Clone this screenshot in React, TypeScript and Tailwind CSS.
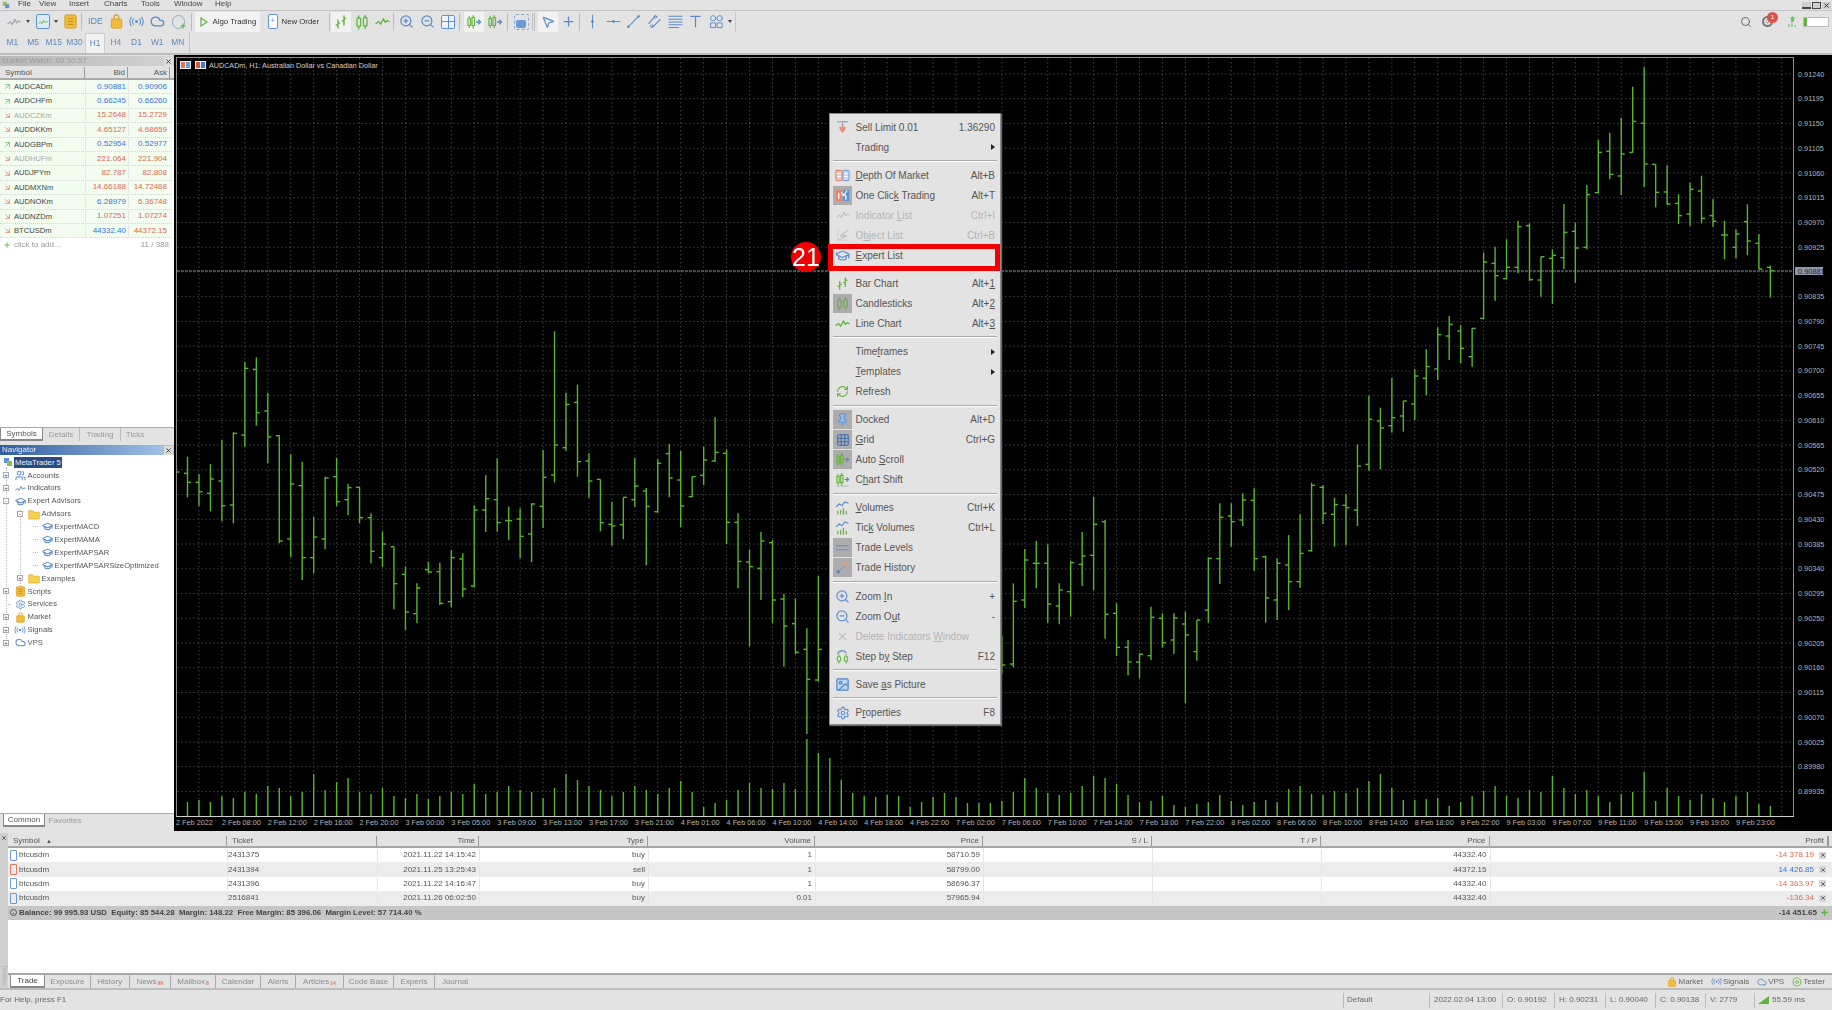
import type { ReactNode } from "react";
import {
  ArrowDownRight,
  ArrowUpRight,
  Bell,
  Cloud,
  GraduationCap,
  Grid3x3,
  Image,
  MousePointer2,
  Pin,
  Plus,
  RefreshCw,
  Search,
  Settings,
  ShoppingBag,
  Users,
  X,
  ZoomIn,
  ZoomOut,
} from "lucide-react";

// bars traced from the picture: [high, low, open, close] in crop pixels (y = offset + px / 3)
const BARS_A = [
  [530, 652, 580, 607], [582, 678, 607, 635], [552, 694, 640, 597], [480, 724, 603, 677], [457, 730, 675, 460],
  [245, 500, 465, 265], [232, 437, 268, 398], [338, 550, 393, 471], [466, 790, 467, 783], [523, 832, 777, 612],
  [545, 900, 617, 833], [710, 880, 833, 771], [590, 808, 777, 594], [533, 678, 590, 665], [612, 706, 659, 623],
  [622, 730, 622, 713], [700, 850, 713, 814], [755, 860, 833, 792], [800, 988, 800, 911], [860, 1050, 883, 996],
  [910, 1030, 1001, 924], [845, 880, 869, 876], [848, 975, 875, 970], [810, 982, 965, 833], [820, 952, 837, 927],
  [676, 922, 918, 690], [585, 756, 690, 656], [535, 755, 659, 728], [680, 780, 722, 722], [685, 834, 717, 769],
  [670, 846, 762, 672], [510, 744, 679, 592], [154, 607, 585, 495], [338, 512, 503, 373], [314, 590, 367, 545],
  [520, 653, 543, 603], [598, 754, 598, 728], [665, 797, 733, 738], [652, 777, 734, 652], [533, 680, 659, 618],
  [624, 856, 633, 679], [538, 698, 695, 550], [492, 652, 521, 594], [512, 742, 600, 678], [590, 652, 650, 590],
  [500, 615, 586, 540], [412, 545, 543, 517], [508, 792, 520, 727], [700, 925, 727, 844], [808, 1098, 846, 860],
  [755, 960, 865, 783], [780, 1030, 788, 960], [942, 1160, 957, 1038], [955, 1122, 1031, 1117], [1045, 1362, 1108, 1198],
  [888, 1205, 1200, 1108],
];
const BARS_B = [
  [708, 822, 795, 795], [550, 802, 792, 604], [447, 625, 600, 480], [423, 565, 490, 490], [433, 668, 490, 612],
  [550, 673, 618, 570], [482, 650, 575, 488], [396, 558, 493, 468], [290, 570, 466, 373], [360, 716, 365, 643],
  [610, 768, 640, 742], [720, 826, 742, 786], [760, 835, 786, 763], [620, 780, 767, 652], [640, 743, 655, 728],
  [640, 762, 720, 654], [635, 910, 672, 705], [660, 782, 755, 660], [472, 668, 630, 475], [310, 552, 476, 352],
  [310, 440, 348, 365], [280, 378, 360, 300], [265, 512, 301, 476], [467, 668, 470, 594], [475, 660, 600, 490],
  [405, 630, 495, 545], [343, 563, 545, 460], [248, 455, 452, 256], [255, 372, 262, 340], [293, 440, 343, 314],
  [281, 436, 316, 323], [133, 378, 330, 198],
];
const BARS_C = [
  [1007, 1232, 1213, 1078], [1043, 1228, 1083, 1104], [953, 1118, 1097, 1073], [1023, 1115, 1068, 1023], [928, 1080, 1032, 948],
  [868, 1005, 955, 920], [802, 960, 927, 824], [768, 900, 828, 793], [795, 910, 813, 865], [805, 920, 890, 805],
  [578, 778, 775, 606], [560, 722, 610, 647], [538, 658, 656, 622], [482, 640, 622, 500], [490, 663, 497, 659],
  [590, 710, 660, 590], [568, 732, 595, 586], [432, 628, 593, 517], [488, 668, 514, 564], [375, 568, 562, 404],
  [240, 400, 398, 277], [218, 358, 274, 343], [174, 405, 348, 282], [80, 278, 277, 184], [22, 380, 190, 312],
  [313, 442, 313, 397], [316, 435, 396, 432], [403, 492, 430, 467], [368, 497, 462, 388], [347, 490, 393, 475],
  [418, 500, 467, 484], [482, 598, 525, 525], [508, 595, 562, 522], [433, 585, 485, 543], [522, 628, 550, 627],
  [617, 713, 622, 632],
];
const VOLUMES = [
  14, 16, 14, 20, 18, 24, 22, 30, 28, 20, 24, 42, 26, 34, 38, 24, 22, 28, 20, 18, 22, 17, 20, 24, 22, 32, 22, 24, 30, 26,
  24, 18, 28, 42, 36, 30, 26, 20, 24, 30, 26, 22, 28, 35, 24, 9, 13, 16, 26, 33, 28, 27, 33, 27, 77, 63, 58, 36, 23, 20,
  19, 21, 20, 9, 14, 19, 23, 19, 13, 13, 13, 15, 24, 38, 28, 23, 21, 23, 30, 40, 38, 32, 21, 14, 15, 20, 11, 9, 12, 14,
  21, 15, 11, 14, 16, 14, 27, 30, 22, 21, 25, 23, 28, 35, 42, 28, 16, 16, 17, 18, 10, 14, 20, 25, 30, 20, 18, 26, 24, 40,
  28, 22, 26, 20, 14, 22, 24, 44, 15, 28, 20, 16, 22, 18, 14, 20, 24, 12, 10,
];
const PRICE_LABELS = [
  "0.91240", "0.91195", "0.91150", "0.91105", "0.91060", "0.91015", "0.90970", "0.90925", "", "0.90835",
  "0.90790", "0.90745", "0.90700", "0.90655", "0.90610", "0.90565", "0.90520", "0.90475", "0.90430", "0.90385",
  "0.90340", "0.90295", "0.90250", "0.90205", "0.90160", "0.90115", "0.90070", "0.90025", "0.89980", "0.89935",
];
const DATE_LABELS = [
  "2 Feb 2022", "2 Feb 08:00", "2 Feb 12:00", "2 Feb 16:00", "2 Feb 20:00", "3 Feb 00:00", "3 Feb 05:00", "3 Feb 09:00",
  "3 Feb 13:00", "3 Feb 17:00", "3 Feb 21:00", "4 Feb 01:00", "4 Feb 06:00", "4 Feb 10:00", "4 Feb 14:00", "4 Feb 18:00",
  "4 Feb 22:00", "7 Feb 02:00", "7 Feb 06:00", "7 Feb 10:00", "7 Feb 14:00", "7 Feb 18:00", "7 Feb 22:00", "8 Feb 02:00",
  "8 Feb 06:00", "8 Feb 10:00", "8 Feb 14:00", "8 Feb 18:00", "8 Feb 22:00", "9 Feb 03:00", "9 Feb 07:00", "9 Feb 11:00",
  "9 Feb 15:00", "9 Feb 19:00", "9 Feb 23:00",
];

const GREEN = "#59b62c";
const BLUE = "#5b8cc8";

const barX = (i: number) => 187.5 + 11.47 * i;
const gridY = (i: number) => 74 + 24.74 * i;

function Bar({ i, bar, offset }: { i: number; bar: number[]; offset: number }) {
  const x = barX(i);
  const [h, l, o, c] = bar.map((v) => offset + v / 3);
  return (
    <g>
      <line x1={x} x2={x} y1={h} y2={l} />
      <line x1={x - 3.5} x2={x} y1={o} y2={o} />
      <line x1={x} x2={x + 3.5} y1={c} y2={c} />
    </g>
  );
}

function Chart() {
  const verticals = Array.from({ length: 70 }, (_, i) => barX(2 * i + 1));
  return (
    <svg viewBox="174 55 1658 776" className="absolute inset-0 h-full w-full">
      <g stroke="#3f4349" strokeWidth="1" strokeDasharray="1.5 2.5">
        {verticals.map((x) => (
          <line key={x} x1={x} x2={x} y1={58} y2={816} />
        ))}
        {PRICE_LABELS.map((_, i) => (
          <line key={i} x1={177} x2={1793} y1={gridY(i)} y2={gridY(i)} />
        ))}
      </g>
      <rect x="176.5" y="57.5" width="1617" height="759" fill="none" stroke="#8d8d8d" />
      <line x1="176" x2="1794" y1="816.5" y2="816.5" stroke="#d0d0d0" />
      <line x1="177" x2="1794" y1="271" y2="271" stroke="#7f8899" strokeDasharray="3 1" />
      <g stroke={GREEN} strokeWidth="1.4">
        <line x1="177" x2="179.5" y1="472" y2="472" />
        {BARS_A.map((b, i) => <Bar key={i} i={i} bar={b} offset={280} />)}
        {BARS_B.map((b, i) => <Bar key={i} i={i + 71} bar={b} offset={400} />)}
        {BARS_C.map((b, i) => <Bar key={i} i={i + 103} bar={b} offset={60} />)}
      </g>
      <g stroke={GREEN} strokeWidth="1.4">
        {VOLUMES.map((v, i) => (
          <line key={i} x1={barX(i)} x2={barX(i)} y1={816 - v} y2={816} />
        ))}
      </g>
      <g fill="#b4b4b4" fontSize="7.3" fontFamily="'Liberation Sans', sans-serif">
        {PRICE_LABELS.map((label, i) => (
          <text key={i} x={1798} y={gridY(i) + 2.6}>{label}</text>
        ))}
        {DATE_LABELS.map((label, i) => (
          <text key={label} x={176 + 45.88 * i} y={825}>{label}</text>
        ))}
      </g>
      <rect x="1795" y="267" width="28" height="8" fill="#8d97ad" />
      <text x="1798" y="273.6" fontSize="7.4" fill="#262a33" fontFamily="'Liberation Sans', sans-serif">0.90881</text>
      <g>
        <rect x="180" y="61" width="11" height="8" fill="#f3f3f3" />
        <rect x="181" y="62" width="4" height="6" fill="#e0765a" />
        <rect x="186" y="62" width="4" height="6" fill="#6c9ad6" />
        <rect x="195" y="61" width="11" height="8" fill="#f3f3f3" />
        <rect x="196" y="62" width="4" height="6" fill="#d8573f" />
        <rect x="201" y="62" width="4" height="6" fill="#3f7cc8" />
      </g>
      <text x="209" y="68" fontSize="7.2" fill="#d0d0d0" fontFamily="'Liberation Sans', sans-serif">AUDCADm, H1:  Australian Dollar vs Canadian Dollar</text>
    </svg>
  );
}

// --- small drawn icons -------------------------------------------------------

function Svg({ size = 16, children }: { size?: number; children: ReactNode }) {
  return (
    <svg width={size} height={size} viewBox="0 0 16 16" fill="none" strokeLinecap="round" strokeLinejoin="round">
      {children}
    </svg>
  );
}

const BarsIcon = ({ size }: { size?: number }) => (
  <Svg size={size}>
    <g stroke="#62b53c" strokeWidth="1.4">
      <path d="M5 6v8M3.2 11H5M5 9h1.6" />
      <path d="M11 2v9M9.2 7H11M11 4.5h1.8" />
    </g>
  </Svg>
);
const CandlesIcon = ({ size }: { size?: number }) => (
  <Svg size={size}>
    <g stroke="#62b53c" strokeWidth="1.3">
      <rect x="3" y="4" width="3.6" height="8.5" rx="1" />
      <rect x="9.4" y="3.5" width="3.6" height="8.5" rx="1" />
      <path d="M4.8 2v2M4.8 12.5V15M11.2 1.5v2M11.2 12v2.5" />
    </g>
  </Svg>
);
const LineChartIcon = ({ size, color = "#62b53c" }: { size?: number; color?: string }) => (
  <Svg size={size}>
    <path d="M1 10l3-2 2 3 3-6 2 4 2-2 2 1" stroke={color} strokeWidth="1.4" />
  </Svg>
);
const ScrollIcon = ({ size, shift }: { size?: number; shift?: boolean }) => (
  <Svg size={size}>
    <g stroke="#62b53c" strokeWidth="1.2">
      <rect x="2" y="4.5" width="2.5" height="7" />
      <rect x="6" y="3.5" width="2.5" height="8" />
      <path d="M3.2 2.5v2M3.2 11.5v2M7.2 1.5v2M7.2 11.5v2.5" />
    </g>
    <path d="M10.5 8H14" stroke={BLUE} strokeWidth="1.3" />
    <path d="M12.5 6l2 2-2 2" stroke={BLUE} strokeWidth="1.3" />
    {shift ? <path d="M2 15h12" stroke="#b5b5b5" strokeWidth="1" /> : null}
  </Svg>
);
const DepthIcon = ({ size }: { size?: number }) => (
  <Svg size={size}>
    <rect x="1" y="2.5" width="6.5" height="11" rx="1" fill="#f0c7b9" stroke="#dd7a5e" />
    <rect x="8.5" y="2.5" width="6.5" height="11" rx="1" fill="#c3d8f2" stroke="#6c9ad6" />
    <path d="M2.5 6h3.5M2.5 9h3.5M10 6h3.5M10 9h3.5" stroke="#fff" />
  </Svg>
);
const OneClickIcon = ({ size }: { size?: number }) => (
  <Svg size={size}>
    <rect x="1" y="2" width="6.5" height="12" fill="#e8876b" />
    <rect x="8.5" y="2" width="6.5" height="12" fill="#5f92d4" />
    <path d="M7 5l2.5 3 3-5" stroke="#fff" strokeWidth="1.3" />
    <path d="M4 6v5M11.5 8v4" stroke="#fff" strokeWidth="1.4" />
  </Svg>
);
const SellIcon = ({ size }: { size?: number }) => (
  <Svg size={size}>
    <path d="M2 1h12" stroke="#5f92d4" strokeWidth="1.2" />
    <path d="M8 3.5v9" stroke="#dd7a5e" strokeWidth="1.6" />
    <path d="M4.8 7.5c0 3.5 1.5 5.5 3.2 6 1.7-.5 3.2-2.5 3.2-6" fill="#e59a82" stroke="#dd7a5e" />
  </Svg>
);
const ObjectsIcon = ({ size }: { size?: number }) => (
  <Svg size={size}>
    <path d="M2 14l10-5H5l9-7" stroke="#bdbdbd" strokeWidth="1.2" />
    <path d="M2 2v12h12" stroke="#cfcfcf" strokeWidth="1" />
  </Svg>
);
const VolumesIcon = ({ size }: { size?: number }) => (
  <Svg size={size}>
    <path d="M1.5 7l3-3 3 2 3-4 3.5 1.5" stroke={BLUE} strokeWidth="1.2" />
    <path d="M3 15v-3M6 15v-4M9 15v-6M12 15v-3" stroke="#62b53c" strokeWidth="1.3" />
    <path d="M9 15v-3" stroke="#dd7a5e" strokeWidth="1.3" />
  </Svg>
);
const LevelsIcon = ({ size }: { size?: number }) => (
  <Svg size={size}>
    <path d="M1.5 6h13M1.5 10.5h13" stroke={BLUE} strokeWidth="1.1" strokeDasharray="1.4 1.4" />
  </Svg>
);
const HistoryIcon = ({ size }: { size?: number }) => (
  <Svg size={size}>
    <path d="M3 13l10-9" stroke={BLUE} strokeWidth="1" strokeDasharray="1.5 1" />
    <circle cx="3.5" cy="12.5" r="2" fill={BLUE} />
    <circle cx="12" cy="4.5" r="2.4" fill="#e59a82" />
  </Svg>
);
const StepIcon = ({ size }: { size?: number }) => (
  <Svg size={size}>
    <path d="M3 5c1-3.5 7-4 9-1" stroke={BLUE} strokeWidth="1.2" />
    <g stroke="#62b53c" strokeWidth="1.2">
      <rect x="2.5" y="8" width="3.5" height="5" rx="1.6" />
      <rect x="10" y="8" width="3.5" height="5" rx="1.6" />
      <path d="M4.2 6v2M4.2 13v2M11.8 6v2M11.8 13v2" />
    </g>
  </Svg>
);
const BookIcon = ({ size = 13 }: { size?: number }) => (
  <svg width={size} height={size} viewBox="0 0 16 16">
    <rect x="2" y="1" width="12" height="14" rx="1.5" fill="#eebd3d" stroke="#d89b1b" />
    <path d="M5 5h6M5 8h6M5 11h6" stroke="#c98f13" strokeWidth="1.2" />
  </svg>
);
const SignalsIcon = ({ size = 14 }: { size?: number }) => (
  <Svg size={size}>
    <circle cx="8" cy="8" r="1.6" fill={BLUE} />
    <path d="M4.8 5a5 5 0 0 0 0 6M11.2 5a5 5 0 0 1 0 6M2.4 3.5a8 8 0 0 0 0 9M13.6 3.5a8 8 0 0 1 0 9" stroke={BLUE} strokeWidth="1.1" />
  </Svg>
);
const TesterIcon = ({ size = 13 }: { size?: number }) => (
  <Svg size={size}>
    <path d="M8 1l6 3.5v7L8 15l-6-3.5v-7z" stroke="#62b53c" strokeWidth="1.3" />
    <circle cx="8" cy="8" r="2.4" stroke="#62b53c" strokeWidth="1.2" />
  </Svg>
);
const BagIcon = ({ size = 13 }: { size?: number }) => (
  <svg width={size} height={size} viewBox="0 0 16 16" fill="none">
    <path d="M5.5 6V3.5a2.5 2.5 0 0 1 5 0V6" stroke="#d89b1b" strokeWidth="1.3" />
    <rect x="2.5" y="5.5" width="11" height="9.5" rx="1" fill="#f2bd3b" stroke="#dd9f1d" />
  </svg>
);
const FolderIcon = () => (
  <svg width="12" height="11" viewBox="0 0 16 14">
    <path d="M1 2h5l2 2h7v9H1z" fill="#f6cf55" stroke="#e1ab2a" />
  </svg>
);

// --- toolbar -----------------------------------------------------------------

function Sep({ className }: { className: string }) {
  return <div className={`h-[18px] w-px shrink-0 bg-[#bdbdbd] ${className}`} />;
}

function Tool({ children, active, className = "" }: { children: ReactNode; active?: boolean; className?: string }) {
  return (
    <div className={`flex h-[20px] w-[20.7px] shrink-0 items-center justify-center ${active ? "bg-[#f2f2f2]" : ""} ${className}`}>
      {children}
    </div>
  );
}

const Caret = ({ className }: { className: string }) => (
  <div className={`h-0 w-0 shrink-0 border-x-[2px] border-t-[3px] border-x-transparent border-t-[#444] ${className}`} />
);

function MainToolbar() {
  return (
    <div className="flex h-[22px] items-center border-t border-[#c4c4c4] pl-[4px]">
      <Tool><LineChartIcon size={14} color="#9aa7b8" /></Tool>
      <Caret className="mr-[2px] ml-[1px]" />
      <Tool className="ml-[1px]">
        <div className="flex h-[15px] w-[14px] items-center justify-center rounded-[2px] border border-[#5f92d4] bg-[#dcebf9]">
          <LineChartIcon size={10} />
        </div>
      </Tool>
      <Caret className="mr-[1px] ml-[1px]" />
      <Tool className="ml-[1px]"><BookIcon size={15} /></Tool>
      <Sep className="mr-[3px]" />
      <Tool><span className="text-[9px] text-[#5f88bb]">IDE</span></Tool>
      <Tool><BagIcon size={15} /></Tool>
      <Tool><SignalsIcon size={15} /></Tool>
      <Tool><Cloud size={15} color={BLUE} /></Tool>
      <Tool>
        <div className="relative">
          <div className="h-[14px] w-[13px] rounded-full border border-[#8aa6c6]" />
          <Plus size={8} color="#62b53c" className="absolute right-[-2px] bottom-[-1px]" strokeWidth={3} />
        </div>
      </Tool>
      <Sep className="ml-[2px]" />
      <div className="ml-[3px] flex h-[20px] w-[65px] shrink-0 items-center gap-[5px] bg-[#f2f2f2] pl-[5px] text-[7.8px] whitespace-nowrap text-[#333]">
        <svg width="8" height="10" viewBox="0 0 8 10" className="shrink-0"><path d="M1 1l6 4-6 4z" fill="none" stroke="#62b53c" strokeWidth="1.2" /></svg>
        Algo Trading
      </div>
      <div className="ml-[3px] flex h-[20px] w-[63px] shrink-0 items-center gap-[4px] pl-[5px] text-[7.8px] whitespace-nowrap text-[#333]">
        <div className="flex h-[15px] w-[10px] shrink-0 items-center justify-center rounded-[2px] border border-[#5f92d4] bg-white text-[7px] text-[#5f92d4]">+</div>
        New Order
      </div>
      <Sep className="ml-[3px]" />
      <Tool active className="ml-[1px]"><BarsIcon size={16} /></Tool>
      <Tool><CandlesIcon size={16} /></Tool>
      <Tool><LineChartIcon size={15} /></Tool>
      <Sep className="" />
      <Tool className="ml-[3px]"><ZoomIn size={15} color={BLUE} /></Tool>
      <Tool><ZoomOut size={15} color={BLUE} /></Tool>
      <Tool>
        <div className="grid h-[14px] w-[14px] grid-cols-2 gap-px rounded-[2px] border border-[#5f92d4] bg-[#5f92d4]">
          <span className="bg-[#eef4fb]" /><span className="bg-[#eef4fb]" /><span className="bg-[#eef4fb]" /><span className="bg-[#eef4fb]" />
        </div>
      </Tool>
      <Sep className="" />
      <Tool active className="ml-[4px]"><ScrollIcon size={16} /></Tool>
      <Tool><ScrollIcon size={16} /></Tool>
      <Sep className="ml-[2px]" />
      <Tool className="ml-[3px]">
        <div className="flex h-[16px] w-[15px] items-end justify-center rounded-[2px] border border-dashed border-[#8aa6c6] pb-[1px]">
          <div className="h-[8px] w-[10px] rounded-[2px] bg-[#6c9ad6]" />
        </div>
      </Tool>
      <Sep className="" />
      <Sep className="ml-px" />
      <Tool active className="ml-[3px]"><MousePointer2 size={14} color={BLUE} /></Tool>
      <Tool><Plus size={15} color={BLUE} /></Tool>
      <Sep className="" />
      <Tool className="ml-[2px]">
        <Svg size={15}><path d="M8 1v14" stroke={BLUE} /><circle cx="8" cy="8" r="1.5" fill={BLUE} /></Svg>
      </Tool>
      <Tool>
        <Svg size={15}><path d="M1 8h14" stroke={BLUE} /><circle cx="8" cy="8" r="1.5" fill={BLUE} /></Svg>
      </Tool>
      <Tool>
        <Svg size={15}><path d="M2 14L14 2" stroke={BLUE} strokeWidth="1.2" /><circle cx="2.5" cy="13.5" r="1.3" fill={BLUE} /><circle cx="13.5" cy="2.5" r="1.3" fill={BLUE} /></Svg>
      </Tool>
      <Tool>
        <Svg size={15}><path d="M2 10l7-8M6 14l8-8" stroke={BLUE} strokeWidth="1.2" /><circle cx="9" cy="3" r="1.4" stroke={BLUE} /><circle cx="5" cy="13" r="1.4" stroke={BLUE} /></Svg>
      </Tool>
      <Tool>
        <Svg size={15}><path d="M1 2.5h14M1 5.5h14M1 8.5h14M1 11.5h14M1 14.5h10" stroke={BLUE} strokeWidth="1.1" /></Svg>
      </Tool>
      <Tool>
        <Svg size={15}><path d="M3 2.5h10M8 2.5v11" stroke={BLUE} strokeWidth="1.3" /></Svg>
      </Tool>
      <Tool>
        <Svg size={15}>
          <circle cx="4.5" cy="4.5" r="2.8" stroke={BLUE} />
          <circle cx="11.5" cy="4.5" r="2.8" stroke={BLUE} />
          <rect x="2" y="9.5" width="5" height="5" stroke={BLUE} />
          <rect x="9" y="9.5" width="5" height="5" stroke={BLUE} />
        </Svg>
      </Tool>
      <Caret className="ml-[1px]" />
      <div className="ml-[3px] h-[20px] w-px shrink-0 bg-[#c9c9c9]" />

      <div className="ml-auto flex items-center pr-[3px]">
        <Search size={12} color="#666" className="mr-[10px]" />
        <div className="relative mr-[14px]">
          <div className="flex h-[11px] w-[11px] items-center justify-center rounded-full border-2 border-[#777]">
            <Bell size={5} color="#777" />
          </div>
          <div className="absolute top-[-4px] left-[5px] flex h-[11px] w-[11px] items-center justify-center rounded-full bg-[#d9534a] text-[6px] text-white">1</div>
        </div>
        <svg width="11" height="13" viewBox="0 0 11 13" className="mr-[5px]">
          <path d="M5.5 1l3 3H7v3H4V4H2.5z" fill="#72c27a" />
          <path d="M2 9v3M5 8v4M8 10v2" stroke="#72c27a" strokeWidth="1.2" />
        </svg>
        <div className="flex h-[10px] w-[26px] border border-[#bbb] bg-white">
          <div className="w-[3px] bg-[#62b53c]" />
        </div>
      </div>
    </div>
  );
}

const TIMEFRAMES = ["M1", "M5", "M15", "M30", "H1", "H4", "D1", "W1", "MN"];

function TimeframeBar() {
  return (
    <div className="flex h-[23px] items-center border-b-2 border-[#bdbdbd] pl-[2px] text-[8.4px] text-[#5f88bb]">
      {TIMEFRAMES.map((t) => (
        <div
          key={t}
          className={`flex h-[20px] w-[20.7px] items-center justify-center ${t === "H1" ? "border-x border-t border-[#cfcfcf] bg-[#f2f2f2]" : ""}`}
        >
          {t}
        </div>
      ))}
      <div className="ml-[1px] h-[20px] w-px bg-[#c4c4c4]" />
    </div>
  );
}

// --- left panels -------------------------------------------------------------

const QUOTES = [
  { s: "AUDCADm", b: "0.90881", a: "0.90906", up: true, bb: true, ab: true },
  { s: "AUDCHFm", b: "0.66245", a: "0.66260", up: true, bb: true, ab: true },
  { s: "AUDCZKm", b: "15.2648", a: "15.2729", dim: true },
  { s: "AUDDKKm", b: "4.65127", a: "4.68659" },
  { s: "AUDGBPm", b: "0.52954", a: "0.52977", up: true, bb: true, ab: true },
  { s: "AUDHUFm", b: "221.064", a: "221.904", dim: true },
  { s: "AUDJPYm", b: "82.787", a: "82.808" },
  { s: "AUDMXNm", b: "14.66188", a: "14.72468" },
  { s: "AUDNOKm", b: "6.28979", a: "6.36748", bb: true },
  { s: "AUDNZDm", b: "1.07251", a: "1.07274" },
  { s: "BTCUSDm", b: "44332.40", a: "44372.15", bb: true },
];

function PanelClose() {
  return (
    <div className="flex h-[9px] w-[9px] items-center justify-center bg-[#dcdcdc]">
      <X size={7} color="#333" strokeWidth={3} />
    </div>
  );
}

function MarketWatch() {
  return (
    <div className="flex h-[390px] flex-col">
      <div className="mt-px flex h-[10px] shrink-0 items-center justify-between bg-gradient-to-r from-[#b8b8b8] to-[#d2d2d2] pr-[1px] pl-[2px] text-[8px] text-[#9a9a9a]">
        Market Watch: 02:30:57
        <PanelClose />
      </div>
      <div className="mt-px grid h-[13px] shrink-0 grid-cols-[85px_43px_42px] border-b-2 border-[#aaa] bg-[#e3e3e3] pr-[2px] text-[8px] leading-[11px] text-[#555]">
        <div className="border-r border-[#999] pl-[5px]">Symbol</div>
        <div className="border-r border-[#999] pr-[2px] text-right">Bid</div>
        <div className="border-r border-[#999] pr-[2px] text-right">Ask</div>
      </div>
      <div className="flex min-h-0 flex-1 flex-col bg-white pr-[2px]">
        {QUOTES.map((q) => (
          <div key={q.s} className="grid h-[14.4px] shrink-0 grid-cols-[85px_43px_42px] items-center border-b border-dotted border-[#d4d4d4] bg-[#f2fcef] text-[8px]">
            <div className={`flex items-center gap-[2px] pl-[3px] ${q.dim ? "text-[#a8a8a8]" : "text-[#444]"}`}>
              {q.up ? <ArrowUpRight size={9} color="#5fbb57" /> : <ArrowDownRight size={9} color="#e8795c" />}
              <span className="text-[7.6px]">{q.s}</span>
            </div>
            <div className={`border-l border-[#e6e6e6] pr-[2px] text-right ${q.bb ? "text-[#3f6fe0]" : "text-[#dc6a52]"}`}>{q.b}</div>
            <div className={`border-l border-[#e6e6e6] pr-[3px] text-right ${q.ab ? "text-[#3f6fe0]" : "text-[#dc6a52]"}`}>{q.a}</div>
          </div>
        ))}
        <div className="flex h-[14.4px] shrink-0 items-center justify-between pr-[3px] pl-[3px] text-[8px] text-[#999]">
          <span className="flex items-center gap-[3px]"><Plus size={8} color="#7bbd5f" strokeWidth={3} />click to add...</span>
          <span>11 / 388</span>
        </div>
      </div>
      <div className="flex h-[18px] shrink-0 items-start border-t border-[#aaa] pr-[2px] text-[8px] text-[#999]">
        <div className="flex h-[13px] w-[43px] items-center justify-center border-x border-b-2 border-[#888] bg-white text-[#555]">Symbols</div>
        <div className="flex h-[13px] w-[37px] items-center justify-center border-r border-[#bbb]">Details</div>
        <div className="flex h-[13px] w-[41px] items-center justify-center border-r border-[#bbb]">Trading</div>
        <div className="flex h-[13px] w-[28px] items-center justify-center">Ticks</div>
      </div>
    </div>
  );
}

const hat = <GraduationCap size={11} color="#4f85c7" strokeWidth={2.2} />;
const TREE = [
  { l: 0, e: "+", i: <Users size={11} color="#6c9ad6" strokeWidth={2.5} />, t: "Accounts" },
  { l: 0, e: "+", i: <LineChartIcon size={11} color="#5a8fb8" />, t: "Indicators" },
  { l: 0, e: "-", i: hat, t: "Expert Advisors" },
  { l: 1, e: "-", i: <FolderIcon />, t: "Advisors" },
  { l: 2, i: hat, t: "ExpertMACD" },
  { l: 2, i: hat, t: "ExpertMAMA" },
  { l: 2, i: hat, t: "ExpertMAPSAR" },
  { l: 2, i: hat, t: "ExpertMAPSARSizeOptimized" },
  { l: 1, e: "+", i: <FolderIcon />, t: "Examples" },
  { l: 0, e: "+", i: <BookIcon size={11} />, t: "Scripts" },
  { l: 0, i: <Settings size={11} color="#5f92d4" strokeWidth={2} />, t: "Services" },
  { l: 0, e: "+", i: <BagIcon size={11} />, t: "Market" },
  { l: 0, e: "+", i: <SignalsIcon size={12} />, t: "Signals" },
  { l: 0, e: "+", i: <Cloud size={11} color={BLUE} strokeWidth={2.2} />, t: "VPS" },
];
const LEVEL_PAD = ["pl-[1px]", "pl-[15px]", "pl-[28px]"];

function Navigator() {
  return (
    <div className="flex min-h-0 flex-1 flex-col">
      <div className="flex h-[10px] shrink-0 items-center justify-between bg-gradient-to-r from-[#2f5c9e] to-[#a9c9ea] pr-[1px] pl-[2px] text-[8px] text-[#e8eef6]">
        Navigator
        <PanelClose />
      </div>
      <div className="relative min-h-0 flex-1 bg-white pt-px text-[7.7px] text-[#555]">
        <div className="absolute top-[12px] bottom-[170px] left-[6px] border-l border-dotted border-[#bbb]" />
        <div className="absolute top-[55px] left-[20px] h-[76px] border-l border-dotted border-[#bbb]" />
        <div className="flex h-[12.9px] items-center pl-[3px]">
          <svg width="10" height="10" viewBox="0 0 10 10" className="mr-[1px]">
            <path d="M1 1h5v5H1z" fill="#5f92d4" />
            <path d="M4 4h5v5H4z" fill="#8cc152" />
          </svg>
          <span className="bg-[#2b4c82] px-px text-[#e8eef6]">MetaTrader 5</span>
        </div>
        {TREE.map((n) => (
          <div key={n.t} className={`relative flex h-[12.9px] items-center ${LEVEL_PAD[n.l]}`}>
            <div className="flex w-[10px] shrink-0 justify-center">
              {n.e ? (
                <div className="flex h-[6px] w-[6px] items-center justify-center border border-[#a8a8a8] bg-white text-[6px] leading-none text-[#444]">
                  {n.e}
                </div>
              ) : (
                <div className="ml-[5px] w-[7px] border-t border-dotted border-[#bbb]" />
              )}
            </div>
            <div className="ml-[3px] flex w-[12px] shrink-0 justify-center">{n.i}</div>
            <span className="ml-[1.5px] whitespace-nowrap">{n.t}</span>
          </div>
        ))}
      </div>
      <div className="flex h-[20px] shrink-0 items-start border-t border-[#aaa] pl-[3px] text-[8px] text-[#999]">
        <div className="flex h-[13px] w-[42px] items-center justify-center border-x border-b-2 border-[#888] bg-white text-[#555]">Common</div>
        <div className="flex h-[13px] w-[40px] items-center justify-center">Favorites</div>
      </div>
    </div>
  );
}

// --- context menu ------------------------------------------------------------

function Mnemonic({ text }: { text: string }) {
  const at = text.indexOf("&");
  if (at < 0) return <>{text}</>;
  return (
    <>
      {text.slice(0, at)}
      <u>{text[at + 1]}</u>
      {text.slice(at + 2)}
    </>
  );
}

type MenuEntry = { t: string; k?: string; i?: ReactNode; on?: boolean; off?: boolean; sub?: boolean } | "sep";

const MENU: MenuEntry[] = [
  { t: "Sell Limit 0.01", k: "1.36290", i: <SellIcon size={13} /> },
  { t: "Trading", sub: true },
  "sep",
  { t: "&Depth Of Market", k: "Alt+B", i: <DepthIcon size={15} /> },
  { t: "One Clic&k Trading", k: "Alt+T", i: <OneClickIcon size={15} />, on: true },
  { t: "Indicator &List", k: "Ctrl+I", off: true, i: <LineChartIcon size={14} color="#c4c4c4" /> },
  { t: "O&bject List", k: "Ctrl+B", off: true, i: <ObjectsIcon size={14} /> },
  { t: "&Expert List", i: <GraduationCap size={15} color="#5f8fcf" /> },
  "sep",
  { t: "Bar Chart", k: "Alt+&1", i: <BarsIcon size={15} /> },
  { t: "Candlesticks", k: "Alt+&2", i: <CandlesIcon size={15} />, on: true },
  { t: "Line Chart", k: "Alt+&3", i: <LineChartIcon size={15} /> },
  "sep",
  { t: "Time&frames", sub: true },
  { t: "&Templates", sub: true },
  { t: "Refresh", i: <RefreshCw size={13} color="#62b53c" /> },
  "sep",
  { t: "Docked", k: "Alt+D", on: true, i: <Pin size={13} color="#5f92d4" fill="#9dc0ea" /> },
  { t: "&Grid", k: "Ctrl+G", on: true, i: <Grid3x3 size={14} color="#3f70b8" /> },
  { t: "Auto &Scroll", on: true, i: <ScrollIcon size={15} /> },
  { t: "C&hart Shift", i: <ScrollIcon size={15} shift /> },
  "sep",
  { t: "&Volumes", k: "Ctrl+K", i: <VolumesIcon size={15} /> },
  { t: "Tic&k Volumes", k: "Ctrl+L", i: <VolumesIcon size={15} /> },
  { t: "Trade Levels", on: true, i: <LevelsIcon size={15} /> },
  { t: "Trade History", on: true, i: <HistoryIcon size={15} /> },
  "sep",
  { t: "Zoom &In", k: "+", i: <ZoomIn size={15} color="#5f92d4" /> },
  { t: "Zoom O&ut", k: "-", i: <ZoomOut size={15} color="#5f92d4" /> },
  { t: "Delete Indicators &Window", off: true, i: <X size={13} color="#bdbdbd" /> },
  { t: "Step b&y Step", k: "F12", i: <StepIcon size={15} /> },
  "sep",
  { t: "Save &as Picture", i: <Image size={15} color="#4f85c7" fill="#bcd5f1" /> },
  "sep",
  { t: "P&roperties", k: "F8", i: <Settings size={14} color="#5f8fcf" /> },
];

function ContextMenu() {
  return (
    <div className="absolute top-[58px] left-[655px] w-[172px] border border-[#8c8c8c] bg-[#e3e3e3] pt-[3px] pb-px text-[10px] text-[#555] shadow-[1px_1px_1px_#666]">
      {MENU.map((m, idx) =>
        m === "sep" ? (
          <div key={idx} className="flex h-[8.2px] items-center px-[3px]">
            <div className="h-[2px] w-full border-b border-white bg-[#a9a9a9]" />
          </div>
        ) : (
          <div key={m.t} className={`flex h-[20px] items-center pr-[5px] ${m.off ? "text-[#b4b4b4]" : ""}`}>
            <div className={`ml-[3px] flex h-[19px] w-[19px] shrink-0 items-center justify-center ${m.on ? "bg-[#adadad]" : ""}`}>
              {m.i}
            </div>
            <span className="ml-[3.5px]"><Mnemonic text={m.t} /></span>
            {m.k ? <span className="ml-auto"><Mnemonic text={m.k} /></span> : null}
            {m.sub ? <div className="ml-auto h-0 w-0 border-y-[3.5px] border-l-[4px] border-y-transparent border-l-[#222]" /> : null}
          </div>
        ),
      )}
    </div>
  );
}

// --- terminal ----------------------------------------------------------------

const COLS = "grid-cols-[219px_150px_102px_169px_167px_168px_169px_169px_168.5px_339.5px]";
const POSITIONS = [
  { ticket: "2431375", time: "2021.11.22 14:15:42", type: "buy", vol: "1", open: "58710.59", now: "44332.40", profit: "-14 378.19" },
  { ticket: "2431394", time: "2021.11.25 13:25:43", type: "sell", vol: "1", open: "58799.00", now: "44372.15", profit: "14 426.85" },
  { ticket: "2431396", time: "2021.11.22 14:16:47", type: "buy", vol: "1", open: "58696.37", now: "44332.40", profit: "-14 363.97" },
  { ticket: "2516841", time: "2021.11.26 06:02:50", type: "buy", vol: "0.01", open: "57965.94", now: "44332.40", profit: "-136.34" },
];
const HEADERS = ["Time", "Type", "Volume", "Price", "S / L", "T / P", "Price", "Profit"];
const TABS = [
  { t: "Exposure", w: "w-[46px]" },
  { t: "History", w: "w-[38.5px]" },
  { t: "News", w: "w-[41.5px]", n: "99" },
  { t: "Mailbox", w: "w-[45px]", n: "8" },
  { t: "Calendar", w: "w-[45px]" },
  { t: "Alerts", w: "w-[35px]" },
  { t: "Articles", w: "w-[48px]", n: "14" },
  { t: "Code Base", w: "w-[50px]" },
  { t: "Experts", w: "w-[41px]" },
  { t: "Journal", w: "w-[40px]" },
];

function Terminal() {
  return (
    <div className="flex h-[155px] shrink-0">
      <div className="flex w-[8px] shrink-0 flex-col items-center bg-[#cfcfcf] pt-[2px]">
        <X size={6} color="#333" strokeWidth={3} />
        <span className="mt-auto mb-[2px] text-[6px] whitespace-nowrap text-[#aaa] [writing-mode:vertical-rl]">Toolbox</span>
      </div>
      <div className="flex min-w-0 flex-1 flex-col pt-[3px]">
        <div className={`grid h-[12px] shrink-0 ${COLS} border-b-2 border-[#a6a6a6] bg-[#e3e3e3] text-[8px] leading-[10px] text-[#555]`}>
          <div className="border-r border-[#999] pl-[5px]">Symbol <span className="ml-[4px] text-[6px]">▲</span></div>
          <div className="border-r border-[#999] pl-[5px]">Ticket</div>
          {HEADERS.map((h, i) => (
            <div key={i} className={`border-r border-[#999] pr-[3px] text-right ${h === "Profit" ? "border-r-2" : ""}`}>{h}</div>
          ))}
        </div>
        <div className="min-h-0 flex-1 bg-white text-[8px] text-[#555]">
          {POSITIONS.map((p, i) => (
            <div key={p.ticket} className={`grid h-[14.4px] ${COLS} items-center ${i % 2 ? "bg-[#ececec]" : "bg-white"}`}>
              <div className="flex items-center pl-[2px]">
                <div className={`mr-[2px] h-[11px] w-[7px] rounded-[1px] border ${p.type === "buy" ? "border-[#6c9ad6]" : "border-[#e0765a]"}`} />
                btcusdm
              </div>
              <div className="border-l border-[#e4e4e4]">{p.ticket}</div>
              <div className="border-l border-[#e4e4e4] pr-[3px] text-right">{p.time}</div>
              <div className="border-l border-[#e4e4e4] pr-[3px] text-right">{p.type}</div>
              <div className="border-l border-[#e4e4e4] pr-[3px] text-right">{p.vol}</div>
              <div className="border-l border-[#e4e4e4] pr-[3px] text-right">{p.open}</div>
              <div className="h-full border-l border-[#e4e4e4]" />
              <div className="h-full border-l border-[#e4e4e4]" />
              <div className="border-l border-[#e4e4e4] pr-[3px] text-right">{p.now}</div>
              <div className="flex items-center justify-end border-l border-[#e4e4e4] pr-[3px]">
                <span className={p.profit.startsWith("-") ? "text-[#dc6a52]" : "text-[#3f6fe0]"}>{p.profit}</span>
                <div className="ml-[5px] flex h-[7px] w-[7px] items-center justify-center bg-[#d8d8d8]"><X size={6} color="#444" strokeWidth={3} /></div>
              </div>
            </div>
          ))}
          <div className="flex h-[14.4px] items-center bg-[#c6c6c6] pr-[3px] pl-[2px] font-bold text-[#444]">
            <div className="mr-[2px] flex h-[7px] w-[7px] items-center justify-center rounded-full border border-[#555] text-[6px] leading-none">-</div>
            <span className="text-[7.8px] whitespace-pre">Balance: 99 995.93 USD  Equity: 85 544.28  Margin: 148.22  Free Margin: 85 396.06  Margin Level: 57 714.40 %</span>
            <span className="ml-auto">-14 451.65</span>
            <Plus size={9} color="#62b53c" strokeWidth={4} className="ml-[3px]" />
          </div>
        </div>
        <div className="flex h-[15px] shrink-0 items-start border-t-2 border-[#a9a9a9] text-[8px] text-[#8b8b8b]">
          <div className="ml-[2px] flex h-[13px] w-[35px] items-center justify-center border-x border-b-2 border-[#888] bg-white text-[#444]">Trade</div>
          {TABS.map((tab, i) => (
            <div key={tab.t} className={`flex h-[13px] ${tab.w} items-center justify-center ${i < TABS.length - 1 ? "border-r border-[#aaa]" : ""}`}>
              {tab.t}
              {tab.n ? <sub className="ml-px text-[5px] font-bold text-[#e0765a]">{tab.n}</sub> : null}
            </div>
          ))}
          <div className="ml-auto flex h-[13px] items-center gap-[4px] pr-[7px] text-[#666]">
            <span className="flex items-center gap-[1px]"><BagIcon size={10} />Market</span>
            <span className="ml-[4px] flex items-center gap-[1px]"><SignalsIcon size={11} />Signals</span>
            <span className="ml-[4px] flex items-center gap-[1px]"><Cloud size={10} color={BLUE} />VPS</span>
            <span className="ml-[4px] flex items-center gap-[1px]"><TesterIcon size={10} />Tester</span>
          </div>
        </div>
      </div>
    </div>
  );
}

const STATUS_CELLS = [
  { t: "2022.02.04 13:00", w: "w-[73px]" },
  { t: "O: 0.90192", w: "w-[52px]" },
  { t: "H: 0.90231", w: "w-[51px]" },
  { t: "L: 0.90040", w: "w-[50px]" },
  { t: "C: 0.90138", w: "w-[50px]" },
  { t: "V: 2779", w: "w-[49px]" },
];

function StatusBar() {
  return (
    <div className="flex h-[22px] shrink-0 items-center border-t-2 border-[#bdbdbd] text-[8px] text-[#666]">
      <span className="w-[1343px]">For Help, press F1</span>
      <div className="flex h-[15px] w-[86px] items-center border-l border-[#bbb] pl-[3px]">Default</div>
      {STATUS_CELLS.map((c) => (
        <div key={c.t} className={`flex h-[15px] ${c.w} items-center border-l border-[#bbb] pl-[4px]`}>{c.t}</div>
      ))}
      <div className="flex h-[15px] items-center border-l border-[#bbb] pl-[3px]">
        <svg width="11" height="8" viewBox="0 0 11 8" className="mr-[3px]">
          <path d="M0 8h11V0z" fill="#62b53c" />
        </svg>
        55.59 ms
      </div>
    </div>
  );
}

export default function App() {
  return (
    <div className="relative h-[1010px] w-[1832px] overflow-hidden bg-[#e3e3e3] [font-family:'Liberation_Sans',Arial,sans-serif]">
      <div className="flex h-full w-full flex-col blur-[0.4px]">
        <div className="flex h-[10px] shrink-0 items-center overflow-hidden text-[8px] leading-none text-[#444]">
          <svg width="8" height="8" viewBox="0 0 10 10" className="mr-[8px] ml-[2px]">
            <path d="M1 1h5v5H1z" fill="#8cc152" />
            <path d="M4 4h5v5H4z" fill="#5f92d4" />
          </svg>
          <span className="w-[21px] -translate-y-[1px]">File</span>
          <span className="w-[30px] -translate-y-[1px]">View</span>
          <span className="w-[35px] -translate-y-[1px]">Insert</span>
          <span className="w-[37px] -translate-y-[1px]">Charts</span>
          <span className="w-[33px] -translate-y-[1px]">Tools</span>
          <span className="w-[41px] -translate-y-[1px]">Window</span>
          <span className="-translate-y-[1px]">Help</span>
          <div className="ml-auto flex items-end gap-px pr-[1px]">
            <div className="h-[7px] w-[9px] border-b-2 border-[#444] bg-[#cfcfcf]" />
            <div className="h-[7px] w-[9px] border border-[#444] bg-[#cfcfcf]" />
            <div className="flex h-[7px] w-[9px] items-center justify-center bg-[#cfcfcf]"><X size={7} color="#222" strokeWidth={3} /></div>
          </div>
        </div>
        <MainToolbar />
        <TimeframeBar />
        <div className="flex h-[778px] shrink-0">
          <div className="flex w-[174px] shrink-0 flex-col">
            <MarketWatch />
            <Navigator />
          </div>
          <div className="relative mb-[2px] flex-1 bg-black">
            <Chart />
            <ContextMenu />
          </div>
        </div>
        <Terminal />
        <StatusBar />
      </div>
      <div className="absolute top-[244px] left-[828px] h-[27px] w-[172px] border-[5px] border-[#f00000]" />
      <div className="absolute top-[242px] left-[791px] flex h-[30px] w-[30px] items-center justify-center rounded-full bg-[#f00000] text-[25px] leading-none text-white">
        21
      </div>
    </div>
  );
}
